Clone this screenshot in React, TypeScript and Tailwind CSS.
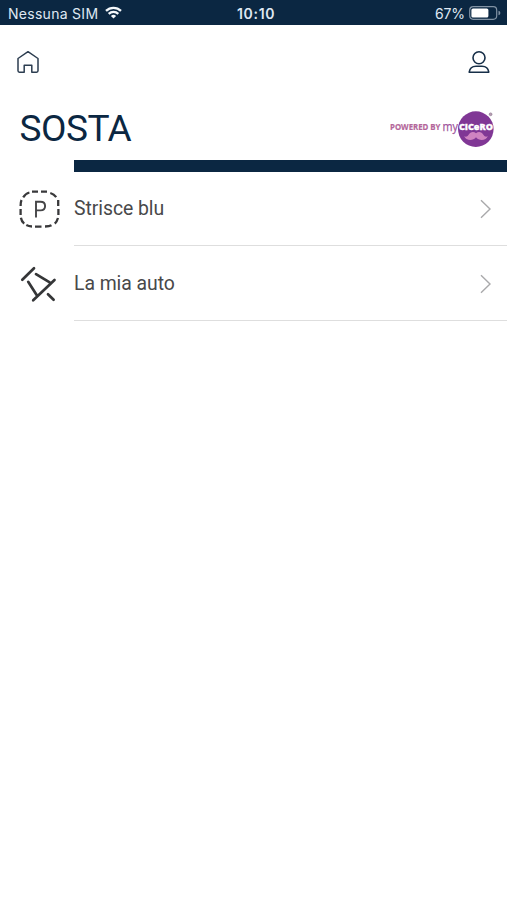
import type { ReactNode } from 'react';

function StatusBar() {
  return (
    <div className="relative flex h-[25px] items-center justify-between bg-[#0b2742] pl-2 pr-[6px] font-['Inter',sans-serif] text-[#dfe8f2]">
      <div className="flex items-center gap-[7px]">
        <span className="whitespace-nowrap pt-[2px] text-[14px] leading-none tracking-[0.28px]">Nessuna SIM</span>
        <svg width="17" height="13" viewBox="0 0 17 13" fill="none" stroke="#f4f8fc" strokeWidth="2.3">
          <path d="M1 4.9C5.2 .8 11.8 .8 16 4.9" />
          <path d="M3.7 7.9C6.4 5.3 10.6 5.3 13.3 7.9" />
          <path d="M8.5 12.6L5.9 9.9Q8.5 7.6 11.1 9.9Z" fill="#f4f8fc" stroke="none" />
        </svg>
      </div>
      <span className="absolute left-[237px] top-[7px] text-[14px] font-semibold leading-none tracking-[0.7px]">10:10</span>
      <div className="flex items-center gap-[4px]">
        <span className="pt-[2px] text-[14px] leading-none tracking-[-0.1px]">67%</span>
        <svg width="32" height="14" viewBox="0 0 32 14">
          <rect x=".7" y=".7" width="27" height="12.6" rx="3.5" fill="none" stroke="#8192a4" strokeWidth="1.2" />
          <rect x="2.4" y="2.4" width="17" height="9.2" rx="1.6" fill="#fff" />
          <path d="M29.5 4.7Q31.4 5.2 31.4 7T29.5 9.3Z" fill="#8192a4" />
        </svg>
      </div>
    </div>
  );
}

function Logo() {
  return (
    <svg width="106" height="40" viewBox="389 109.5 106 40" fontFamily="'Open Sans', sans-serif">
      <circle cx="475.8" cy="129.6" r="17.8" fill="#803795" />
      <text transform="translate(390 130.8) scale(.85 1)" fontSize="9.2" fontWeight="700" fill="#b4669a" stroke="#b4669a" strokeWidth=".15" textLength="59.4" lengthAdjust="spacingAndGlyphs">POWERED BY</text>
      <text x="442.5" y="131.2" fontSize="12.5" fill="#a0559c" stroke="#a0559c" strokeWidth=".25" textLength="15.5" lengthAdjust="spacingAndGlyphs">my</text>
      <text x="458.9" y="130.8" fontSize="9.4" fontWeight="800" fill="#fff" stroke="#fff" strokeWidth=".3" textLength="34" lengthAdjust="spacingAndGlyphs">CICeRO</text>
      <path d="M476 133.8C473.4 131.6 470.2 132.5 468.4 135.5C467.2 137.5 465.4 137.6 464.2 136.5C465.5 141 472.9 142 476 137.7C479.1 142 486.5 141 487.8 136.5C486.6 137.6 484.8 137.5 483.6 135.5C481.8 132.5 478.6 131.6 476 133.8Z" fill="#cf83c1" />
      <circle cx="490.6" cy="114.8" r="1.4" fill="#b9a0b4" stroke="#8e7890" strokeWidth=".7" />
    </svg>
  );
}

function ParkingIcon() {
  return (
    <svg width="42" height="40" viewBox="18 189 42 40" fill="none" stroke="#39393b" strokeWidth="2.3">
      <path d="M32 191.6H38M41 191.6H47M50.3 193Q54 194 56.2 197.2M58.2 200V206M58.4 209V215M58 218Q57 221.5 54.8 223.6M51.5 225.3Q49.5 226.4 45 226.5M41.5 226.6H35M32 226.5Q28.5 226.4 26.3 225.1M24.2 223.6Q21.5 221.5 20.9 217.8M20.6 215V209M20.6 206Q20.6 202 21.5 200M23.2 197.3Q25.5 193.5 29.4 192.5" />
      <path d="M36 217.5V201.7H40.5Q45.1 201.7 45.1 206T40.5 210.4H36" stroke="#454547" strokeWidth="1.9" />
    </svg>
  );
}

function PinIcon() {
  return (
    <svg width="40" height="40" viewBox="18 264 40 40" fill="none" stroke="#353638" strokeWidth="2.7" strokeLinecap="round">
      <path d="M22.3 279.7L34 268.3M36 274.2L49.7 282.4M28.2 281.8L36.8 295.3M33.2 300.3L54.5 280M48 294.2L53.6 299.8" />
    </svg>
  );
}

function Row({ icon, label }: { icon: ReactNode; label: string }) {
  return (
    <button className="flex w-full items-stretch text-left first-of-type:h-[74px] last-of-type:h-[75px] last-of-type:pt-px">
      <span className="flex w-[74px] shrink-0 items-center pl-[18px]">{icon}</span>
      <span className="flex flex-1 items-center justify-between border-b border-[#dedede] pr-[15px]">
        <span className="text-[19.4px] leading-6 tracking-[-0.05px] text-[#48484a]">{label}</span>
        <svg width="13" height="20" viewBox="0 0 13 20" fill="none" stroke="#a9a9ab" strokeWidth="1.4">
          <path d="M2 1.3L11 10L2 18.7" />
        </svg>
      </span>
    </button>
  );
}

export default function App() {
  return (
    <main className="min-h-screen w-full bg-white font-['Roboto',sans-serif]">
      <StatusBar />
      <nav className="flex h-[72px] items-center justify-between px-4 pt-px">
        <button aria-label="Home">
          <svg width="24" height="24" viewBox="16 49.5 24 24" fill="none" stroke="#2c3d50" strokeWidth="1.5" strokeLinejoin="round">
            <path d="M18 58L28 51.2L38 58V70.3Q38 71.7 36.6 71.7H31.8V64.7H24.2V71.7H19.4Q18 71.7 18 70.3Z" />
          </svg>
        </button>
        <button aria-label="Profile">
          <svg width="24" height="24" viewBox="467 49.5 24 24" fill="none" stroke="#172f48" strokeWidth="1.6" strokeLinejoin="round">
            <circle cx="479" cy="57.2" r="6" />
            <path d="M469.2 71.7Q470 65.8 476 65.8H482Q488 65.8 488.8 71.7Z" />
          </svg>
        </button>
      </nav>
      <header className="flex h-[63px] items-center justify-between pl-[19.5px] pr-[12px]">
        <h1 className="pb-px text-[37px] leading-none tracking-[-0.5px] text-[#0b2742]">SOSTA</h1>
        <Logo />
      </header>
      <div className="ml-[74px] h-3 bg-[#0b2742]" />
      <section>
        <Row icon={<ParkingIcon />} label="Strisce blu" />
        <Row icon={<PinIcon />} label="La mia auto" />
      </section>
    </main>
  );
}
